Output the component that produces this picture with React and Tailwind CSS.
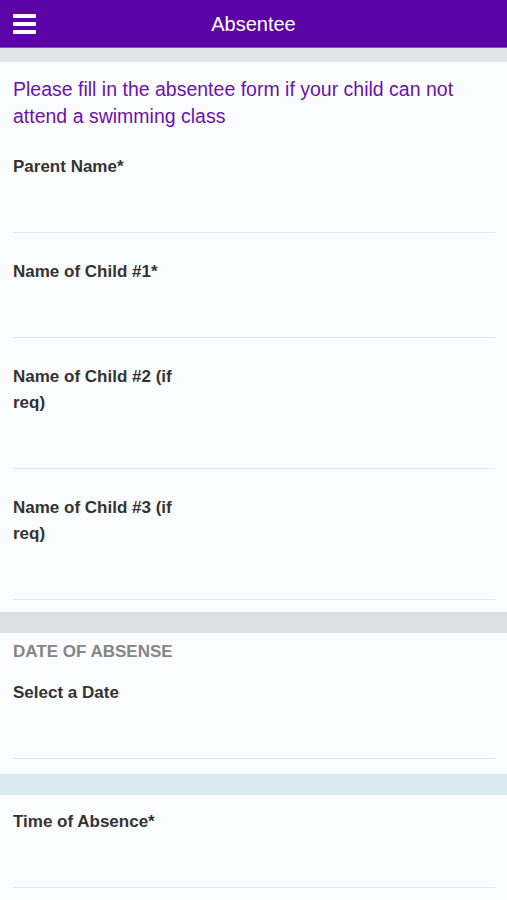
import { useState } from 'react'

const font = { fontFamily: '"Liberation Sans", Arial, sans-serif' }

function Field({ label, wrap, top = 'pt-[26px]' }) {
  const [value, setValue] = useState('')
  return (
    <div className={top}>
      <label className={`block text-[17px] leading-[26px] font-bold text-[#333] ${wrap ? 'w-[180px]' : ''}`}>{label}</label>
      <input
        value={value}
        onChange={(e) => setValue(e.target.value)}
        className="block w-full h-[53px] bg-transparent border-b border-[#e3e4e6] outline-none text-[16px]"
      />
    </div>
  )
}

export default function App() {
  return (
    <div className="min-h-[900px] bg-[#e2e5e6]" style={font}>
      {/* Header */}
      <div className="h-[48px] bg-[#5a04a8] border-b border-[#8a4fd0] flex items-center relative">
        <button className="absolute left-[13px] top-[14px] flex flex-col gap-[4px]">
          <span className="block w-[23px] h-[4px] bg-white rounded-[1px]" />
          <span className="block w-[23px] h-[4px] bg-white rounded-[1px]" />
          <span className="block w-[23px] h-[4px] bg-white rounded-[1px]" />
        </button>
        <h1 className="flex-1 text-center text-white text-[20px]">Absentee</h1>
      </div>

      <div className="h-[14px] bg-[#e1e4e5]" />

      {/* Student info card */}
      <div className="bg-[#fbfcfd] pl-[13px] pr-[12px] pt-[14px] pb-[12px]">
        <p className="text-[19.5px] leading-[27px] text-[#6a12b0]">
          Please fill in the absentee form if your child can not attend a swimming class
        </p>
        <Field label="Parent Name*" top="pt-[24px]" />
        <Field label="Name of Child #1*" />
        <Field label="Name of Child #2 (if req)" wrap />
        <Field label="Name of Child #3 (if req)" wrap />
      </div>

      <div className="h-[21px] bg-[#dcdfe1]" />

      {/* Date card */}
      <div className="bg-[#fbfcfd] pl-[13px] pr-[12px] pt-[6px] pb-[15px]">
        <h2 className="text-[17px] leading-[26px] font-bold text-[#858585]">DATE OF ABSENSE</h2>
        <Field label="Select a Date" top="pt-[15px]" />
      </div>

      <div className="h-[21px] bg-[#d9e9ee]" />

      {/* Time card */}
      <div className="bg-[#fbfcfd] pl-[13px] pr-[12px] pt-[14px] pb-[14px]">
        <Field label="Time of Absence*" top="pt-0" />
      </div>
    </div>
  )
}
